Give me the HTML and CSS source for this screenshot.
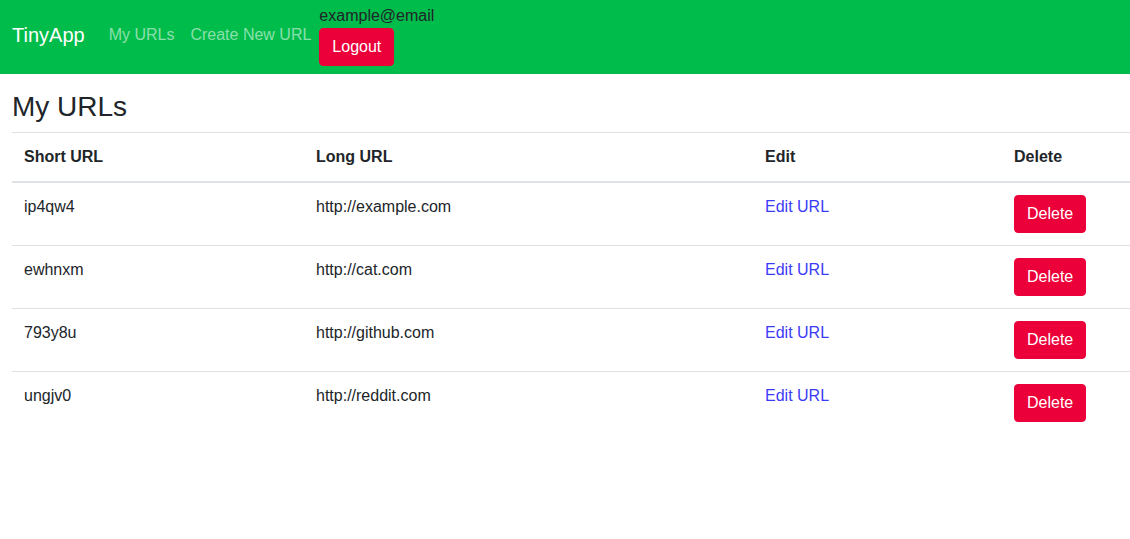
FILE: index.html
```html
<!DOCTYPE html>
<html lang="en">
<head>
<meta charset="utf-8">
<title>TinyApp</title>
<link rel="stylesheet" href="styles.css">
</head>
<body>
<nav class="navbar">
  <a class="brand" href="#">TinyApp</a>
  <div class="nav-links">
    <a class="nav-link" href="#">My URLs</a>
    <a class="nav-link" href="#">Create New URL</a>
  </div>
  <div class="user">
    <div class="email">example@email</div>
    <button class="btn btn-red">Logout</button>
  </div>
</nav>
<main class="main">
  <h3 class="title">My URLs</h3>
  <table class="table">
    <thead>
      <tr>
        <th class="c1">Short URL</th>
        <th class="c2">Long URL</th>
        <th class="c3">Edit</th>
        <th class="c4">Delete</th>
      </tr>
    </thead>
    <tbody>
      <tr><td>ip4qw4</td><td>http://example.com</td><td><a class="link" href="#">Edit URL</a></td><td><button class="btn btn-red">Delete</button></td></tr>
      <tr><td>ewhnxm</td><td>http://cat.com</td><td><a class="link" href="#">Edit URL</a></td><td><button class="btn btn-red">Delete</button></td></tr>
      <tr><td>793y8u</td><td>http://github.com</td><td><a class="link" href="#">Edit URL</a></td><td><button class="btn btn-red">Delete</button></td></tr>
      <tr><td>ungjv0</td><td>http://reddit.com</td><td><a class="link" href="#">Edit URL</a></td><td><button class="btn btn-red">Delete</button></td></tr>
    </tbody>
  </table>
</main>
</body>
</html>
```
FILE: styles.css
```css
* { box-sizing: border-box; }
html, body {
  margin: 0;
  padding: 0;
  font-family: "Liberation Sans", Arial, sans-serif;
  font-size: 16px;
  line-height: 1.5;
  color: #212529;
  background: #fff;
}
.navbar {
  display: flex;
  align-items: center;
  background: #00bc4a;
  padding: 4px 12px 8px 12px;
  height: 74px;
}
.brand {
  font-size: 20px;
  line-height: 30px;
  color: #fff;
  text-decoration: none;
  margin-right: 16px;
}
.nav-links {
  display: flex;
}
.nav-link {
  color: rgba(255, 255, 255, 0.55);
  text-decoration: none;
  padding: 8px;
  line-height: 24px;
}
.user {
  display: flex;
  flex-direction: column;
  align-items: flex-start;
}
.email {
  line-height: 24px;
  color: #212529;
}
.btn {
  font-family: inherit;
  font-size: 16px;
  line-height: 24px;
  padding: 6px 12px;
  border: 1px solid transparent;
  border-radius: 4px;
  cursor: pointer;
}
.btn-red {
  background: #eb0039;
  border-color: #eb0039;
  color: #fff;
}
.main {
  padding: 16px 0 0 12px;
}
.title {
  margin: 0 0 8px 0;
  font-size: 28px;
  font-weight: 500;
  line-height: 1.2;
}
.table {
  width: 1118px;
  border-collapse: collapse;
  table-layout: fixed;
}
.table th, .table td {
  text-align: left;
  vertical-align: top;
  padding: 12px;
  border-top: 1px solid #dee2e6;
}
.table th {
  font-weight: 700;
  border-bottom: 2px solid #dee2e6;
}
.c1 { width: 292px; }
.c2 { width: 449px; }
.c3 { width: 249px; }
.c4 { width: 128px; }
.link {
  color: #3b3bf7;
  text-decoration: none;
}
```
